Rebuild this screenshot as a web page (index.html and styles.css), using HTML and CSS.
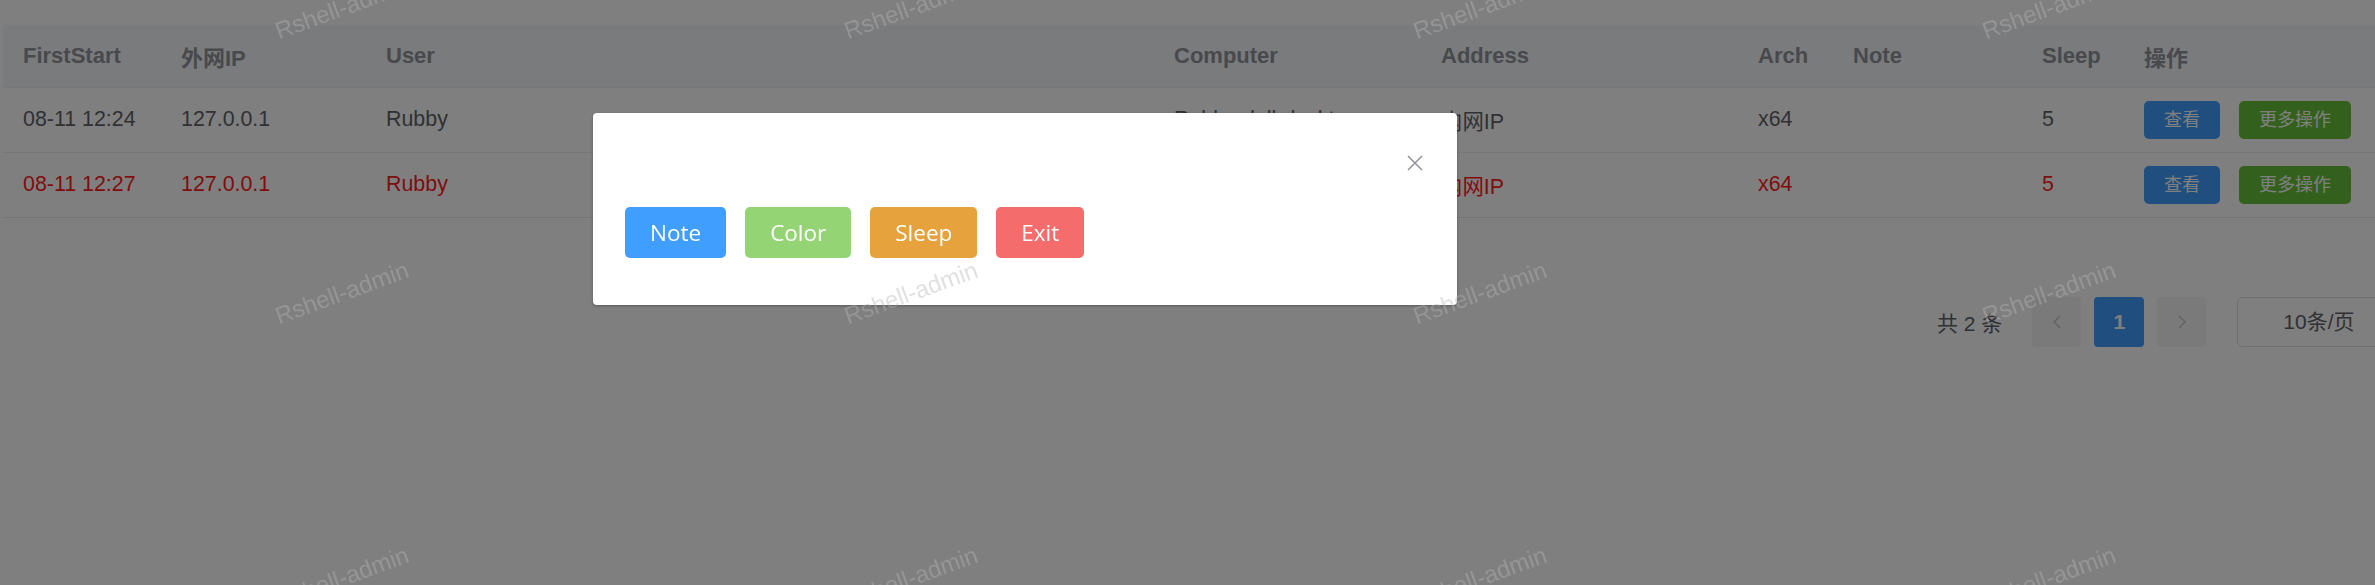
FILE: index.html
```html
<!DOCTYPE html>
<html lang="zh">
<head>
<meta charset="utf-8">
<title>Rshell-admin</title>
<link rel="stylesheet" href="styles.css">
</head>
<body>
<div class="page">
  <table class="grid">
    <colgroup>
      <col class="c-first"><col class="c-ip"><col class="c-user"><col class="c-comp"><col class="c-addr"><col class="c-arch"><col class="c-note"><col class="c-sleep"><col class="c-op">
    </colgroup>
    <thead>
      <tr>
        <th>FirstStart</th><th>外网IP</th><th>User</th><th>Computer</th><th>Address</th><th>Arch</th><th>Note</th><th>Sleep</th><th>操作</th>
      </tr>
    </thead>
    <tbody>
      <tr>
        <td>08-11 12:24</td><td>127.0.0.1</td><td>Rubby</td><td>Rubby-dell-desktop</td><td>内网IP</td><td>x64</td><td></td><td>5</td>
        <td><div class="ops"><button class="btn btn-primary">查看</button><button class="btn btn-success">更多操作</button></div></td>
      </tr>
      <tr class="red">
        <td>08-11 12:27</td><td>127.0.0.1</td><td>Rubby</td><td>Rubby-dell-desktop</td><td>内网IP</td><td>x64</td><td></td><td>5</td>
        <td><div class="ops"><button class="btn btn-primary">查看</button><button class="btn btn-success">更多操作</button></div></td>
      </tr>
    </tbody>
  </table>

  <div class="pager">
    <span class="total">共 2 条</span>
    <button class="pbtn disabled">
      <svg width="12" height="16" viewBox="0 0 12 16"><path d="M9 2 L3 8 L9 14" fill="none" stroke="#c0c4cc" stroke-width="1.4"/></svg>
    </button>
    <button class="pbtn active">1</button>
    <button class="pbtn disabled">
      <svg width="12" height="16" viewBox="0 0 12 16"><path d="M3 2 L9 8 L3 14" fill="none" stroke="#c0c4cc" stroke-width="1.4"/></svg>
    </button>
    <div class="sizes">10条/页</div>
  </div>
</div>

<div class="mask"></div>

<div class="dialog">
  <div class="dialog-header">
    <svg class="close" width="16" height="16" viewBox="0 0 16 16"><path d="M1 1 L15 15 M15 1 L1 15" stroke="#909399" stroke-width="1.5" fill="none"/></svg>
  </div>
  <div class="dialog-body">
    <button class="dbtn d-note">Note</button>
    <button class="dbtn d-color">Color</button>
    <button class="dbtn d-sleep">Sleep</button>
    <button class="dbtn d-exit">Exit</button>
  </div>
</div>

<div class="watermark">
  <div class="wm"><span>Rshell-admin</span></div><div class="wm"><span>Rshell-admin</span></div><div class="wm"><span>Rshell-admin</span></div><div class="wm"><span>Rshell-admin</span></div>
  <div class="wm"><span>Rshell-admin</span></div><div class="wm"><span>Rshell-admin</span></div><div class="wm"><span>Rshell-admin</span></div><div class="wm"><span>Rshell-admin</span></div>
  <div class="wm"><span>Rshell-admin</span></div><div class="wm"><span>Rshell-admin</span></div><div class="wm"><span>Rshell-admin</span></div><div class="wm"><span>Rshell-admin</span></div>
</div>
</body>
</html>
```

FILE: styles.css
```css
html, body {
  margin: 0;
  padding: 0;
  overflow: hidden;
  background: #ffffff;
}

body {
  font-family: "Liberation Sans", Arial, "Noto Sans CJK SC", sans-serif;
  color: #606266;
  width: 2375px;
  height: 585px;
  position: relative;
}

.page {
  padding: 25px 0 0 3px;
  width: 2372px;
  overflow: hidden;
}

.grid {
  border-collapse: collapse;
  table-layout: fixed;
  width: 2372px;
  font-size: 21.4px;
}

.c-first { width: 158px; }
.c-ip { width: 205px; }
.c-user { width: 788px; }
.c-comp { width: 267px; }
.c-addr { width: 317px; }
.c-arch { width: 95px; }
.c-note { width: 189px; }
.c-sleep { width: 102px; }
.c-op { width: 251px; }

.grid th {
  background: #f5f7fa;
  color: #909399;
  font-size: 22px;
  font-weight: bold;
  text-align: left;
  height: 62px;
  padding: 1px 0 0 20px;
  box-sizing: border-box;
  border-bottom: 1px solid #ebeef5;
  white-space: nowrap;
}

.grid td {
  height: 64px;
  padding: 0 0 0 20px;
  border-bottom: 1px solid #ebeef5;
  white-space: nowrap;
  overflow: hidden;
  color: #606266;
}

.grid tbody tr:last-child td {
  border-bottom-color: #e4e6eb;
}

.grid tr.red td {
  color: #ff1a1a;
}

.ops {
  display: flex;
  gap: 19px;
  padding-top: 1px;
}

.btn {
  height: 38px;
  padding: 0 20px;
  border: none;
  border-radius: 5px;
  color: #ffffff;
  font-family: "Liberation Sans", "Noto Sans CJK SC", sans-serif;
  font-size: 18px;
  line-height: 38px;
}

.btn-primary { background: #409eff; }
.btn-success { background: #67c23a; }

.pager {
  display: flex;
  align-items: center;
  margin-top: 79px;
  padding-left: 1934px;
  height: 50px;
  white-space: nowrap;
}

.pager > * {
  flex-shrink: 0;
}

.total {
  font-size: 21px;
  color: #606266;
  margin-right: 30px;
  font-family: "Liberation Sans", "Noto Sans CJK SC", sans-serif;
}

.pbtn {
  width: 49px;
  height: 50px;
  border: none;
  border-radius: 4px;
  background: #f4f4f5;
  display: flex;
  align-items: center;
  justify-content: center;
  padding: 0;
  margin-right: 13px;
  font-family: "Liberation Sans", Arial, sans-serif;
  font-size: 21px;
  font-weight: bold;
  color: #606266;
}

.pbtn.active {
  width: 50px;
  background: #409eff;
  color: #ffffff;
}

.sizes {
  margin-left: 18px;
  width: 170px;
  height: 48px;
  border: 1px solid #dcdfe6;
  border-radius: 6px;
  box-sizing: content-box;
  padding-left: 45px;
  font-size: 21px;
  line-height: 48px;
  color: #606266;
  font-family: "Liberation Sans", "Noto Sans CJK SC", sans-serif;
}

.mask {
  position: fixed;
  inset: 0;
  background: rgba(0, 0, 0, 0.5);
}

.dialog {
  position: absolute;
  left: 593px;
  top: 113px;
  width: 864px;
  height: 192px;
  background: #ffffff;
  border-radius: 4px;
  box-shadow: 0 1px 3px rgba(0, 0, 0, 0.3);
  box-sizing: border-box;
}

.dialog-header {
  height: 94px;
  box-sizing: border-box;
  padding: 42px 34px 0 0;
  display: flex;
  justify-content: flex-end;
  align-items: flex-start;
}

.close {
  display: block;
}

.dialog-body {
  display: flex;
  gap: 19px;
  padding: 0 32px;
}

.dbtn {
  height: 51px;
  padding: 0 25px;
  border: none;
  border-radius: 5px;
  color: #ffffff;
  font-family: "Open Sans", "Noto Sans", sans-serif;
  font-size: 22.5px;
  font-weight: 500;
  line-height: 51px;
}

.d-note { background: #409eff; }
.d-color { background: #95d475; }
.d-sleep { background: #e6a23c; }
.d-exit { background: #f56c6c; }

.watermark {
  position: fixed;
  left: 58px;
  top: -135px;
  display: grid;
  grid-template-columns: repeat(4, 569px);
  grid-auto-rows: 285px;
  pointer-events: none;
  z-index: 10;
}

.wm {
  display: flex;
  align-items: center;
  justify-content: center;
}

.wm span {
  display: block;
  transform: rotate(-20deg);
  font-family: "Liberation Sans", Arial, sans-serif;
  font-size: 24px;
  color: rgba(180, 180, 180, 0.42);
  white-space: nowrap;
}
```
